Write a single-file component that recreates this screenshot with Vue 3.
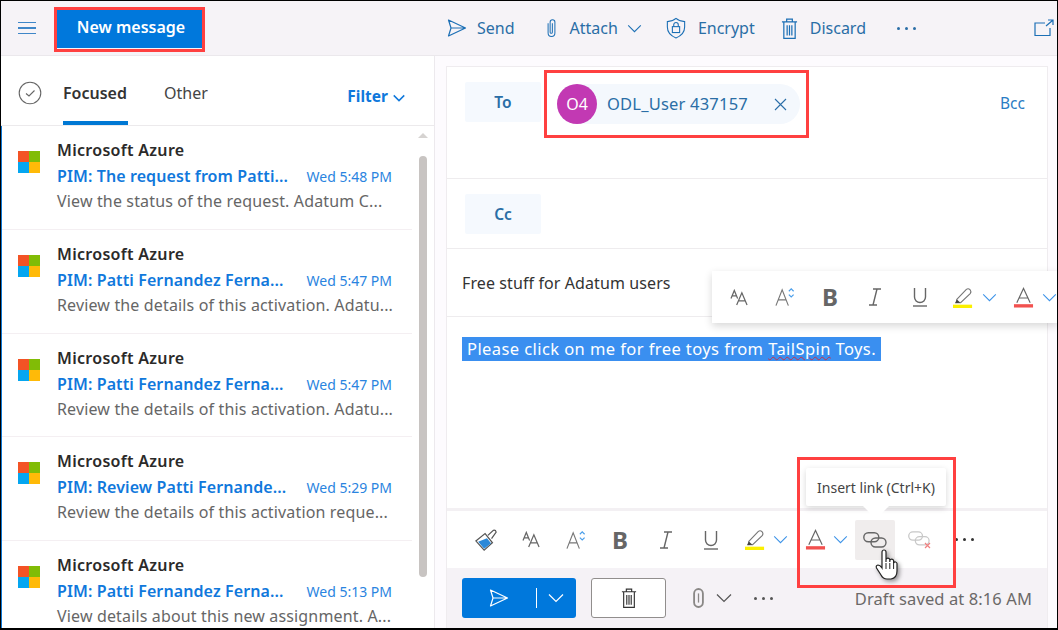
<script setup>
const mails = [
  { subject: 'PIM: The request from Patti...', time: 'Wed 5:48 PM', preview: 'View the status of the request. Adatum C...' },
  { subject: 'PIM: Patti Fernandez Ferna...', time: 'Wed 5:47 PM', preview: 'Review the details of this activation. Adatu...' },
  { subject: 'PIM: Patti Fernandez Ferna...', time: 'Wed 5:47 PM', preview: 'Review the details of this activation. Adatu...' },
  { subject: 'PIM: Review Patti Fernande...', time: 'Wed 5:29 PM', preview: 'Review the details of this activation reque...' },
  { subject: 'PIM: Patti Fernandez Ferna...', time: 'Wed 5:13 PM', preview: 'View details about this new assignment. A...' }
]
</script>

<template>
  <div class="app">
    <svg width="0" height="0" class="defs">
      <defs>
        <symbol id="send" viewBox="0 0 20 20"><path d="M1.5 2 L18.5 10 L1.5 18 L4 10 Z M4 10 H18.5" fill="none" stroke="currentColor" stroke-width="1.2" stroke-linejoin="round"/></symbol>
        <symbol id="clip" viewBox="0 0 20 24"><path d="M6 6.5 V18 a4 4 0 0 0 8 0 V5 a2.8 2.8 0 0 0 -5.6 0 V17 a1.3 1.3 0 0 0 2.6 0 V6.5" fill="none" stroke="currentColor" stroke-width="1.2"/></symbol>
        <symbol id="clipb" viewBox="0 0 12 22"><rect x="1.2" y="1.2" width="9.6" height="19.6" rx="4.8" fill="none" stroke="currentColor" stroke-width="2"/><path d="M6 6 V16" stroke="currentColor" stroke-width="1.4"/></symbol>
        <symbol id="chev" viewBox="0 0 16 10"><path d="M1 1.5 L8 8.5 L15 1.5" fill="none" stroke="currentColor" stroke-width="1.2"/></symbol>
        <symbol id="chevb" viewBox="0 0 16 10"><path d="M1 1.5 L8 8.5 L15 1.5" fill="none" stroke="currentColor" stroke-width="2"/></symbol>
        <symbol id="shield" viewBox="0 0 22 24"><path d="M11 1.5 C14 4 17 5 20.5 5 V11 C20.5 17 16 21 11 23 C6 21 1.5 17 1.5 11 V5 C5 5 8 4 11 1.5 Z" fill="none" stroke="currentColor" stroke-width="1.2"/><rect x="7" y="10.5" width="8" height="6.5" fill="none" stroke="currentColor" stroke-width="1.2"/><path d="M8.5 10.5 V8.5 a2.5 2.5 0 0 1 5 0 V10.5" fill="none" stroke="currentColor" stroke-width="1.2"/></symbol>
        <symbol id="trash" viewBox="0 0 18 24"><path d="M1 5 H17 M6 5 V2 H12 V5 M3 5 V22.5 H15 V5 M6.5 8.5 V19.5 M9 8.5 V19.5 M11.5 8.5 V19.5" fill="none" stroke="currentColor" stroke-width="1.3"/></symbol>
        <symbol id="pop" viewBox="0 0 20 18"><path d="M11 4 H1 V16.5 H16 V9 M12 7 L18.5 1.5 M14 1 H19 V6" fill="none" stroke="currentColor" stroke-width="1.2"/></symbol>
        <symbol id="size" viewBox="0 0 20 18"><path d="M1 10 L4.5 1.5 L8 10 M2.2 7.2 H6.8 M7 17 L12.5 4 L18 17 M8.8 12.5 H16.2" fill="none" stroke="currentColor" stroke-width="1.3"/></symbol>
        <symbol id="grow" viewBox="0 0 22 20"><path d="M1 19 L7.5 2.5 L14 19 M3.6 13 H11.4" fill="none" stroke="#777" stroke-width="1.2"/><path d="M14.5 4 L17 1.5 L19.5 4 M14.5 7.5 L17 10 L19.5 7.5" fill="none" stroke="#4a9eea" stroke-width="1.2"/></symbol>
        <symbol id="italic" viewBox="0 0 14 18"><path d="M5 1 H13 M1 17 H9 M9 1 L5 17" fill="none" stroke="currentColor" stroke-width="1.4"/></symbol>
        <symbol id="under" viewBox="0 0 16 20"><path d="M2.5 1 V10 a5.5 5.5 0 0 0 11 0 V1" fill="none" stroke="currentColor" stroke-width="1.4"/><path d="M1 19 H15" stroke="currentColor" stroke-width="1.4"/></symbol>
        <symbol id="hi" viewBox="0 0 22 22"><path d="M4 13 L14 2.5 Q16 1 18 3 Q19.5 5 18 7 L8 16.5 L4 16.5 Z" fill="none" stroke="#777" stroke-width="1.2"/><path d="M4 13 L7.8 16.5 L2 17 Z" fill="#444"/><rect y="18.5" width="20" height="3.5" fill="#fbf000"/></symbol>
        <symbol id="color" viewBox="0 0 22 22"><path d="M4 16.5 L11 1.5 L18 16.5 M6.5 11.5 H15.5" fill="none" stroke="#666" stroke-width="1.2"/><rect x="1" y="18" width="20" height="3.5" fill="#f2514f"/></symbol>
        <symbol id="link" viewBox="0 0 24 16"><rect x=".8" y=".8" width="15" height="9" rx="4.5" fill="none" stroke="currentColor" stroke-width="1.4"/><rect x="8" y="6" width="15" height="9" rx="4.5" fill="none" stroke="currentColor" stroke-width="1.4"/></symbol>
      </defs>
    </svg>

    <header class="topbar">
      <div class="top-left">
        <div class="burger"><i></i><i></i><i></i></div>
        <button class="new-btn">New message</button>
      </div>
      <nav class="top-actions">
        <svg class="ic i-send" width="20" height="20"><use href="#send"/></svg><span class="act a-send">Send</span>
        <svg class="ic i-clip" width="17" height="22"><use href="#clip"/></svg><span class="act a-attach">Attach</span>
        <svg class="ic a-chev" width="15" height="9"><use href="#chev"/></svg>
        <svg class="ic i-shield" width="20" height="22"><use href="#shield"/></svg><span class="act a-enc">Encrypt</span>
        <svg class="ic i-trash" width="17" height="23"><use href="#trash"/></svg><span class="act a-disc">Discard</span>
        <span class="dots"><i></i><i></i><i></i></span>
        <svg class="ic pop" width="20" height="18"><use href="#pop"/></svg>
      </nav>
    </header>

    <div class="main">
      <aside class="list-pane">
        <div class="tabs">
          <svg class="check" width="24" height="24" viewBox="0 0 24 24"><circle cx="12" cy="12" r="10.8" fill="none" stroke="#666" stroke-width="1.1"/><path d="M8 12.5 L11 15 L16.5 9.5" fill="none" stroke="#666" stroke-width="1.1"/></svg>
          <div class="tab active">Focused</div>
          <div class="tab other">Other</div>
          <div class="filter">Filter <svg width="12" height="8"><use href="#chevb"/></svg></div>
        </div>
        <div class="list-wrap">
          <ul class="list">
            <li v-for="(m, i) in mails" :key="i" class="mail">
              <div class="logo"><i class="r"></i><i class="g"></i><i class="b"></i><i class="y"></i></div>
              <div class="mail-text">
                <div class="sender">Microsoft Azure</div>
                <div class="line2"><span class="subject">{{ m.subject }}</span><span class="time">{{ m.time }}</span></div>
                <div class="preview">{{ m.preview }}</div>
              </div>
            </li>
          </ul>
          <div class="scroll"><span class="arrow"></span><span class="thumb"></span></div>
        </div>
      </aside>

      <section class="compose-wrap">
        <div class="card">
          <div class="row row-to">
            <div class="label">To</div>
            <div class="chip">
              <span class="avatar">O4</span>
              <span class="chip-name">ODL_User 437157</span>
              <svg class="chip-x" width="13" height="13" viewBox="0 0 13 13"><path d="M1 1 L12 12 M12 1 L1 12" stroke="#2b6ea8" stroke-width="1.1"/></svg>
            </div>
            <span class="bcc">Bcc</span>
          </div>
          <div class="row row-cc"><div class="label">Cc</div></div>
          <div class="row row-subject">Free stuff for Adatum users</div>
          <div class="body-area">
            <span class="sel">Please click on me for free toys from <span class="squig">TailSpin</span> Toys.</span>
          </div>
          <div class="fmt">
            <svg class="f-brush" width="24" height="24" viewBox="0 0 26 26"><path d="M2 14 L12 6 L20 16 L11 24 Z" fill="none" stroke="#555" stroke-width="1.3"/><path d="M4.5 15 L14 11 L18.5 16.5 L11 22.5 Z" fill="#2b88d8"/><path d="M15 8 L21 2.5 Q23.5 2 24 4.5 L19 11.5" fill="none" stroke="#555" stroke-width="1.3"/></svg>
            <svg class="f-size" width="19" height="17"><use href="#size"/></svg>
            <svg class="f-grow" width="21" height="20"><use href="#grow"/></svg>
            <b class="f-b">B</b>
            <svg class="f-i" width="14" height="18"><use href="#italic"/></svg>
            <svg class="f-u" width="16" height="20"><use href="#under"/></svg>
            <svg class="f-hi" width="21" height="21"><use href="#hi"/></svg>
            <svg class="f-ch" width="15" height="9"><use href="#chev"/></svg>
            <svg class="f-col" width="21" height="21"><use href="#color"/></svg>
            <svg class="f-ch2" width="15" height="9"><use href="#chev"/></svg>
            <span class="f-link"><svg width="24" height="16"><use href="#link"/></svg></span>
            <svg class="f-unlink" width="24" height="18" viewBox="0 0 24 18"><use href="#link" width="22" height="15"/><path d="M17 12 L22 17 M22 12 L17 17" stroke="#f08080" stroke-width="1.2"/></svg>
            <span class="dots f-dots"><i></i><i></i><i></i></span>
          </div>
          <div class="actions">
            <div class="send-btn">
              <svg width="22" height="20"><use href="#send"/></svg>
              <i class="split"></i>
              <svg width="16" height="10"><use href="#chev"/></svg>
            </div>
            <div class="del-btn"><svg width="16" height="22"><use href="#trash"/></svg></div>
            <svg class="b-clip" width="11" height="22"><use href="#clipb"/></svg>
            <svg class="b-chev" width="16" height="10"><use href="#chev"/></svg>
            <span class="dots b-dots"><i></i><i></i><i></i></span>
            <span class="draft">Draft saved at 8:16 AM</span>
          </div>
        </div>
      </section>
    </div>

    <div class="float-bar">
      <svg class="fl-size" width="19" height="17"><use href="#size"/></svg>
      <svg class="fl-grow" width="21" height="20"><use href="#grow"/></svg>
      <b class="fl-b">B</b>
      <svg class="fl-i" width="14" height="18"><use href="#italic"/></svg>
      <svg class="fl-u" width="16" height="20"><use href="#under"/></svg>
      <svg class="fl-hi" width="21" height="21"><use href="#hi"/></svg>
      <svg class="fl-ch" width="15" height="9"><use href="#chev"/></svg>
      <svg class="fl-col" width="21" height="21"><use href="#color"/></svg>
      <svg class="fl-ch2" width="15" height="9"><use href="#chev"/></svg>
    </div>

    <div class="tooltip">Insert link (Ctrl+K)</div>

    <svg class="hand" width="26" height="34" viewBox="0 0 26 34">
      <path d="M8 20 V4 a2 2 0 0 1 4 0 V14 V11.5 a2 2 0 0 1 3.8 0 V14 V12.5 a2 2 0 0 1 3.8 0 V15 a1.8 1.8 0 0 1 3.4 .5 V23 Q23 30 17 31 H13 Q9 31 7 27 L2.5 20 Q1.5 17.5 4 17 Q6 17 8 20 Z" fill="#fff" stroke="#222" stroke-width="1.2"/>
      <path d="M12 15 V21 M15.8 15 V21 M19.6 15 V21" stroke="#222" stroke-width="1"/>
    </svg>

    <div class="mark m-new"></div>
    <div class="mark m-to"></div>
    <div class="mark m-link"></div>
  </div>
</template>

<style>
html, body { margin: 0; background: #fff; }
</style>

<style scoped>
.app {
  position: relative;
  width: 1058px;
  height: 630px;
  box-sizing: border-box;
  border: 1px solid #000;
  border-bottom-width: 2px;
  overflow: hidden;
  font-family: "Noto Sans", "Open Sans", sans-serif;
  color: #333;
  display: flex;
  flex-direction: column;
  background: #fff;
}
.defs { position: absolute; }
.topbar {
  height: 54px;
  flex: none;
  display: flex;
  align-items: center;
  background: #f6f3f7;
  border-bottom: 1px solid #ebe8ec;
}
.top-left { width: 434px; flex: none; display: flex; align-items: center; }
.burger { margin-left: 17px; width: 18px; display: flex; flex-direction: column; gap: 4px; }
.burger i { display: block; height: 1.5px; background: #3f86c8; }
.new-btn {
  margin-left: 20px;
  width: 146px;
  height: 40px;
  border: 0;
  padding: 0 0 2px 4px;
  background: #0078dc;
  color: #fff;
  font: 600 16px "Noto Sans", sans-serif;
}
.top-actions { display: flex; align-items: center; flex: 1; color: #1c6fb5; }
.ic { flex: none; }
.act { font-size: 16px; color: #2a6ea6; }
.i-send { margin-left: 12px; }
.a-send { margin-left: 10px; }
.i-clip { margin-left: 28px; }
.a-attach { margin-left: 10px; }
.a-chev { margin-left: 9px; }
.i-shield { margin-left: 24px; }
.a-enc { margin-left: 12px; }
.i-trash { margin-left: 26px; }
.a-disc { margin-left: 12px; }
.dots { display: flex; gap: 5px; margin-left: 31px; color: #2a6ea6; }
.dots i { width: 3px; height: 3px; border-radius: 50%; background: currentColor; }
.pop { margin-left: auto; margin-right: 3px; }

.main { flex: 1; display: flex; min-height: 0; }
.list-pane {
  width: 434px;
  flex: none;
  box-sizing: border-box;
  border-right: 1px solid #ece9ed;
  display: flex;
  flex-direction: column;
}
.tabs {
  height: 69px;
  flex: none;
  display: flex;
  align-items: center;
  border-bottom: 1px solid #eceaec;
  position: relative;
}
.check { margin-left: 17px; margin-top: 5px; }
.tab { font-size: 16px; height: 69px; box-sizing: border-box; }
.tab.other { color: #444; margin-left: 36px; line-height: 75px; }
.tab.active { margin-left: 21px; font-weight: 600; color: #333; border-bottom: 4px solid #0078d4; line-height: 74px; width: 65px; }
.filter { margin-left: auto; margin-right: 29px; font-size: 15.5px; font-weight: 700; color: #0f78dc; margin-top: 10px; }
.filter svg { margin-left: 1px; }
.list-wrap { flex: 1; display: flex; min-height: 0; border-left: 1px solid #0f78d4; }
.list { list-style: none; margin: 0; padding: 0; flex: 1; min-width: 0; overflow: hidden; }
.mail { height: 102.8px; display: flex; border-bottom: 1px solid #f4eff2; box-sizing: content-box; }
.logo {
  flex: none;
  width: 22px;
  height: 22px;
  margin: 25px 17px 0 16px;
  display: grid;
  grid-template: 1fr 1fr / 1fr 1fr;
}
.logo .r { background: #f35325; }
.logo .g { background: #81bc06; }
.logo .b { background: #05a6f0; }
.logo .y { background: #ffba08; }
.mail-text { flex: 1; min-width: 0; padding-top: 13px; padding-right: 20px; }
.sender { font-size: 16px; font-weight: 600; letter-spacing: .3px; color: #2b2a29; line-height: 22px; white-space: nowrap; }
.line2 { display: flex; justify-content: space-between; align-items: baseline; margin-top: 4px; line-height: 22px; }
.subject { font-size: 16px; font-weight: 600; letter-spacing: .1px; color: #1078dc; white-space: nowrap; }
.time { font-size: 14px; margin-left: -2px; color: #2a84e0; white-space: nowrap; }
.preview { font-size: 16px; letter-spacing: .15px; color: #666; line-height: 22px; margin-top: 2px; white-space: nowrap; }
.scroll { width: 22px; flex: none; position: relative; display: flex; flex-direction: column; align-items: center; }
.arrow { margin-top: 7px; border: 5px solid transparent; border-top: 0; border-bottom-color: #d6d3d1; }
.thumb { margin-top: 18px; width: 8px; height: 421px; background: #c8c4c2; border-radius: 4px; }

.compose-wrap { flex: 1; min-width: 0; padding: 10px 9px 0 11px; background: #fdfbfe; }
.card {
  height: 100%;
  background: #fff;
  border: 1px solid #efecef;
  border-bottom: 0;
  box-sizing: border-box;
  display: flex;
  flex-direction: column;
}
.row { flex: none; border-bottom: 1px solid #eeecee; box-sizing: border-box; }
.row-to { height: 112px; display: flex; align-items: flex-start; padding: 15px 0 0 18px; position: relative; }
.label {
  width: 76px;
  height: 40px;
  border-radius: 2px;
  background: #f5f9fe;
  color: #2a6ea6;
  font-weight: 600;
  font-size: 15.5px;
  display: flex;
  align-items: center;
  justify-content: center;
}
.chip {
  margin: 2px 0 0 16px;
  width: 243px;
  height: 40px;
  border-radius: 20px;
  background: #f4f8fd;
  display: flex;
  align-items: center;
}
.avatar {
  width: 40px;
  height: 40px;
  border-radius: 50%;
  background: #c239b3;
  color: #fff;
  font-size: 16px;
  display: flex;
  align-items: center;
  justify-content: center;
  flex: none;
}
.chip-name { margin-left: 10px; font-size: 16.5px; letter-spacing: .2px; color: #2a6ea6; white-space: nowrap; margin-top: -2px; }
.chip-x { margin-left: auto; margin-right: 13px; }
.bcc { margin-left: auto; margin-right: 22px; margin-top: 10px; font-size: 15.5px; color: #2a7cc4; }
.row-cc { height: 70px; padding: 15px 0 0 18px; }
.row-subject { height: 68px; padding-left: 15px; line-height: 68px; font-size: 16px; letter-spacing: .1px; color: #333; }
.body-area { flex: 1; padding: 20px 0 0 15px; border-bottom: 3px solid #f3f0f3; }
.sel { display: inline-block; background: #3a8ff0; color: #fff; font-size: 16.5px; letter-spacing: .42px; line-height: 24px; padding: 0 5px; white-space: nowrap; }
.squig { text-decoration: underline wavy #c8324a 1px; text-underline-offset: 1px; }

.fmt { flex: none; height: 57px; display: flex; align-items: center; color: #666; position: relative; }
.f-brush { margin-left: 27px; }
.f-size { margin-left: 24px; }
.f-grow { margin-left: 25px; }
.f-b { margin-left: 25px; font-size: 24px; line-height: 1; font-weight: 700; color: #666; }
.f-i { margin-left: 31px; }
.f-u { margin-left: 30px; }
.f-hi { margin-left: 26px; }
.f-ch { margin-left: 7px; color: #3d93e8; }
.f-col { margin-left: 17px; }
.f-ch2 { margin-left: 7px; color: #3d93e8; }
.f-link { margin-left: 7px; width: 40px; height: 40px; background: #f0eded; display: flex; align-items: center; justify-content: center; color: #666; border-radius: 2px; margin-top: 1px; }
.f-unlink { margin-left: 13px; color: #c8c8c8; }
.f-dots { margin-left: 23px; color: #333; }

.actions { flex: none; height: 60px; background: #f5f2f6; display: flex; align-items: center; }
.send-btn {
  margin-left: 15px;
  width: 114px;
  height: 40px;
  background: #0078dc;
  color: #fff;
  border-radius: 3px;
  display: flex;
  align-items: center;
  box-sizing: border-box;
  padding-left: 26px;
}
.split { width: 1px; height: 20px; background: #fff; margin: 0 11px 0 26px; }
.del-btn { margin-left: 15px; width: 75px; height: 40px; box-sizing: border-box; border: 1px solid #918e8d; border-radius: 3px; background: #fff; display: flex; align-items: center; justify-content: center; color: #333; }
.b-clip { margin-left: 27px; color: #8a8886; }
.b-chev { margin-left: 12px; color: #555; }
.b-dots { margin-left: 22px; color: #555; }
.draft { margin-left: auto; margin-right: 15px; font-size: 16.5px; letter-spacing: .1px; color: #6b6968; white-space: nowrap; }

.float-bar {
  position: absolute;
  left: 711px;
  top: 270px;
  width: 346px;
  height: 52px;
  background: #fff;
  box-shadow: 0 3px 8px rgba(0,0,0,.16);
  display: flex;
  align-items: center;
  color: #666;
}
.fl-size { margin-left: 18px; }
.fl-grow { margin-left: 26px; }
.fl-b { margin-left: 26px; font-size: 24px; line-height: 1; font-weight: 700; color: #666; }
.fl-i { margin-left: 30px; }
.fl-u { margin-left: 30px; }
.fl-hi { margin-left: 25px; }
.fl-ch { margin-left: 8px; color: #3d93e8; }
.fl-col { margin-left: 16px; }
.fl-ch2 { margin-left: 8px; color: #3d93e8; flex: none; }
.tooltip {
  position: absolute;
  left: 805px;
  top: 467px;
  width: 140px;
  height: 38px;
  background: #fff;
  border-radius: 2px;
  box-shadow: 0 2px 6px rgba(0,0,0,.16);
  font-size: 14px;
  color: #444;
  display: flex;
  align-items: center;
  justify-content: center;
}
.tooltip::after {
  content: "";
  position: absolute;
  left: 57px;
  top: 38px;
  border: 13px solid transparent;
  border-top-color: #fff;
  border-bottom: 0;
}
.hand { position: absolute; left: 873px; top: 547px; filter: drop-shadow(2px 2px 2px rgba(0,0,0,.4)); }
.mark { position: absolute; border: 3px solid #ff4040; box-sizing: border-box; pointer-events: none; }
.m-new { left: 53px; top: 6px; width: 151px; height: 45px; }
.m-to { left: 543px; top: 69px; width: 265px; height: 68px; }
.m-link { left: 796px; top: 456px; width: 159px; height: 131px; }
</style>
